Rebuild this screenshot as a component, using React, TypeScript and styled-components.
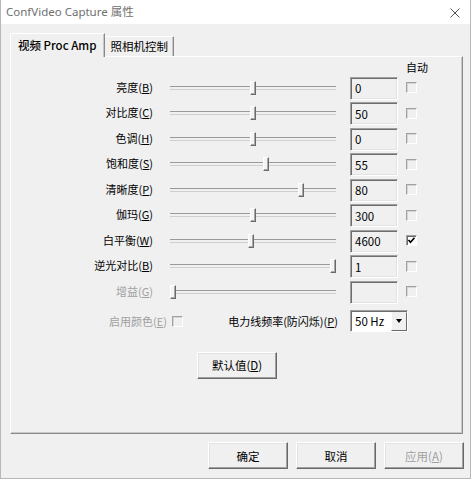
import React from 'react';
import styled, { createGlobalStyle } from 'styled-components';

const GlobalStyle = createGlobalStyle`
  html, body {
    margin: 0;
    padding: 0;
    background: #ffffff;
  }
  * {
    box-sizing: border-box;
  }
  body {
    font-family: "Noto Sans CJK SC", "Noto Sans", sans-serif;
    font-size: 11px;
    color: #000000;
  }
`;

type SliderItem = {
    label: string;
    hotkey: string;
    value: string;
    pos: number;
    auto?: boolean;
    disabled?: boolean;
};

const sliders: SliderItem[] = [
    { label: '亮度', hotkey: 'B', value: '0', pos: 0.5 },
    { label: '对比度', hotkey: 'C', value: '50', pos: 0.5 },
    { label: '色调', hotkey: 'H', value: '0', pos: 0.5 },
    { label: '饱和度', hotkey: 'S', value: '55', pos: 0.58 },
    { label: '清晰度', hotkey: 'P', value: '80', pos: 0.8 },
    { label: '伽玛', hotkey: 'G', value: '300', pos: 0.5 },
    { label: '白平衡', hotkey: 'W', value: '4600', pos: 0.49, auto: true },
    { label: '逆光对比', hotkey: 'B', value: '1', pos: 1 },
    { label: '增益', hotkey: 'G', value: '', pos: 0, disabled: true },
];

const TRACK_WIDTH = 166;
const THUMB_WIDTH = 6;

const CloseIcon = () => (
    <svg width="10" height="10" viewBox="0 0 10 10">
        <path d="M0.5 0.5 L9.5 9.5 M9.5 0.5 L0.5 9.5" stroke="#555" strokeWidth="1" fill="none" />
    </svg>
);

const CheckMark = () => (
    <svg width="9" height="9" viewBox="0 0 9 9">
        <path d="M1.5 4 L3.5 6.2 L7.5 1.8" stroke="#000" strokeWidth="1.7" fill="none" />
    </svg>
);

const Label = ({ text, hotkey }: { text: string; hotkey: string }) => (
    <>
        {text}(<u>{hotkey}</u>)
    </>
);

const App = () => {
    return (
        <>
            <GlobalStyle />
            <Window>
                <TitleBar>
                    <Title>ConfVideo Capture 属性</Title>
                    <CloseButton>
                        <CloseIcon />
                    </CloseButton>
                </TitleBar>
                <Body>
                    <Tabs>
                        <Tab active={true}>视频 Proc Amp</Tab>
                        <Tab active={false}>照相机控制</Tab>
                    </Tabs>
                    <Panel>
                        <AutoHeader>自动</AutoHeader>
                        {sliders.map((s, i) => (
                            <SliderRow key={i}>
                                <RowLabel disabled={!!s.disabled}>
                                    <Label text={s.label} hotkey={s.hotkey} />
                                </RowLabel>
                                <Track>
                                    <Thumb style={{ left: Math.round(s.pos * (TRACK_WIDTH - THUMB_WIDTH)) }} />
                                </Track>
                                <ValueBox>{s.value}</ValueBox>
                                <CheckBox checked={!!s.auto} gap={8}>
                                    {s.auto && <CheckMark />}
                                </CheckBox>
                            </SliderRow>
                        ))}
                        <OptionsRow>
                            <EnableLabel>
                                启用颜色(<u>E</u>)
                            </EnableLabel>
                            <CheckBox checked={false} gap={5} />
                            <PowerLabel>
                                电力线频率(防闪烁)(<u>P</u>)
                            </PowerLabel>
                            <Combo>
                                <ComboText>50 Hz</ComboText>
                                <ComboButton>
                                    <Arrow />
                                </ComboButton>
                            </Combo>
                        </OptionsRow>
                        <DefaultRow>
                            <PushButton width={80} disabled={false}>
                                默认值(<u>D</u>)
                            </PushButton>
                        </DefaultRow>
                    </Panel>
                    <Footer>
                        <PushButton width={80} disabled={false}>确定</PushButton>
                        <PushButton width={80} disabled={false}>取消</PushButton>
                        <PushButton width={80} disabled={true}>
                            应用(<u>A</u>)
                        </PushButton>
                    </Footer>
                </Body>
            </Window>
        </>
    );
};

const Window = styled.div`
    width: 471px;
    height: 479px;
    display: flex;
    flex-direction: column;
    border: 1px solid #b8b8b8;
    border-top: none;
    background: #f0f0f0;
`

const TitleBar = styled.div`
    height: 24px;
    flex: 0 0 24px;
    background: #ffffff;
    display: flex;
    align-items: center;
    justify-content: space-between;
    padding: 0 10px 0 5px;
`

const Title = styled.span`
    font-family: "Noto Sans", "Noto Sans CJK SC", sans-serif;
    font-size: 11.5px;
    color: #707070;
    line-height: 24px;
`

const CloseButton = styled.div`
    display: flex;
    align-items: center;
    margin-top: 2px;
`

const Body = styled.div`
    flex: 1;
    display: flex;
    flex-direction: column;
    padding: 9px 6px 0 9px;
`

const Tabs = styled.div`
    display: flex;
    align-items: flex-end;
    height: 23px;
    position: relative;
    z-index: 1;
`

const Tab = styled.div<{ active: boolean }>`
    height: ${({ active }) => active ? '24px' : '20px'};
    margin-bottom: ${({ active }) => active ? '-1px' : '0'};
    padding: ${({ active }) => active ? '0 8px 0 7px' : '0 5px'};
    display: flex;
    align-items: center;
    background: #f0f0f0;
    border-top: 1px solid #ffffff;
    border-left: ${({ active }) => active ? '1px solid #ffffff' : 'none'};
    border-right: 1px solid #8a8a8a;
    box-shadow: inset -1px 0 0 #c8c8c8;
    font-size: 11.5px;
    font-weight: ${({ active }) => active ? 500 : 400};
    line-height: 1;
    color: #000;
    white-space: nowrap;
`

const Panel = styled.div`
    width: 453px;
    height: 378px;
    border: 1px solid;
    border-color: #ffffff #8a8a8a #8a8a8a #ffffff;
    box-shadow: inset -1px -1px 0 #c8c8c8;
    padding-top: 4px;
    display: flex;
    flex-direction: column;
`

const AutoHeader = styled.div`
    height: 13px;
    line-height: 13px;
    padding-left: 395px;
    font-size: 11px;
    color: #000;
`

const SliderRow = styled.div`
    height: 25.5px;
    display: flex;
    align-items: center;
`

const RowLabel = styled.div<{ disabled: boolean }>`
    width: 143px;
    padding-right: 1px;
    text-align: right;
    white-space: nowrap;
    line-height: 14px;
    color: ${({ disabled }) => disabled ? '#a0a0a0' : '#000000'};
`

const Track = styled.div`
    position: relative;
    width: ${TRACK_WIDTH}px;
    height: 14px;
    margin-left: 16px;
    margin-top: 2px;

    &::before {
        content: '';
        position: absolute;
        left: 0;
        right: 0;
        top: 5px;
        height: 2px;
        border-top: 1px solid #9a9a9a;
        border-bottom: 1px solid #cfcfcf;
    }
`

const Thumb = styled.div`
    position: absolute;
    top: 0;
    width: ${THUMB_WIDTH}px;
    height: 14px;
    background: #f4f4f4;
    border-left: 1px solid #ffffff;
    border-top: 1px solid #ffffff;
    border-right: 1px solid #6a6a6a;
    border-bottom: 1px solid #6a6a6a;
    box-shadow: inset -1px -1px 0 #a8a8a8;
`

const ValueBox = styled.div`
    width: 48px;
    height: 23px;
    margin-left: 14px;
    margin-top: 3px;
    padding-left: 4px;
    display: flex;
    align-items: center;
    font-size: 11.5px;
    background: #f0f0f0;
    border: 1px solid;
    border-color: #a0a0a0 #ffffff #ffffff #a0a0a0;
    box-shadow: inset 1px 1px 0 #6e6e6e, inset -1px -1px 0 #e3e3e3;
`

const CheckBox = styled.div<{ checked: boolean; gap: number }>`
    width: 11px;
    height: 11px;
    margin-left: ${({ gap }) => gap}px;
    margin-top: 2px;
    display: flex;
    align-items: center;
    justify-content: center;
    background: ${({ checked }) => checked ? '#ffffff' : '#f0f0f0'};
    border: 1px solid;
    border-color: #a0a0a0 #ffffff #ffffff #a0a0a0;
    box-shadow: inset 1px 1px 0 ${({ checked }) => checked ? '#696969' : '#d6d6d6'};
`

const OptionsRow = styled.div`
    height: 34px;
    display: flex;
    align-items: center;
`

const EnableLabel = styled.div`
    width: 156px;
    text-align: right;
    white-space: nowrap;
    color: #a0a0a0;
`

const PowerLabel = styled.div`
    width: 155px;
    text-align: right;
    white-space: nowrap;
    color: #000;
`

const Combo = styled.div`
    width: 58px;
    height: 22px;
    margin-left: 12px;
    display: flex;
    background: #ffffff;
    border: 1px solid;
    border-color: #a0a0a0 #ffffff #ffffff #a0a0a0;
    box-shadow: inset 1px 1px 0 #6e6e6e;
`

const ComboText = styled.div`
    flex: 1;
    padding: 1px 0 0 4px;
    display: flex;
    align-items: center;
    font-size: 11.5px;
`

const ComboButton = styled.div`
    width: 16px;
    margin: 1px 0 0 0;
    display: flex;
    align-items: center;
    justify-content: center;
    background: #f0f0f0;
    border: 1px solid;
    border-color: #f0f0f0 #6a6a6a #6a6a6a #ffffff;
`

const Arrow = styled.div`
    width: 0;
    height: 0;
    border-left: 3.5px solid transparent;
    border-right: 3.5px solid transparent;
    border-top: 4px solid #000;
`

const DefaultRow = styled.div`
    margin-top: 14px;
    padding-left: 186px;
    display: flex;
`

const PushButton = styled.div<{ width: number; disabled: boolean }>`
    width: ${({ width }) => width}px;
    height: 27px;
    display: flex;
    align-items: center;
    justify-content: center;
    font-size: 11.5px;
    color: ${({ disabled }) => disabled ? '#a0a0a0' : '#000000'};
    background: #f0f0f0;
    border: 1px solid;
    border-color: #ffffff #696969 #696969 #ffffff;
    box-shadow: inset -1px -1px 0 #a0a0a0, inset 1px 1px 0 #e3e3e3;
`

const Footer = styled.div`
    margin-top: 8px;
    display: flex;
    justify-content: flex-end;
    gap: 8px;
`

export default App;
